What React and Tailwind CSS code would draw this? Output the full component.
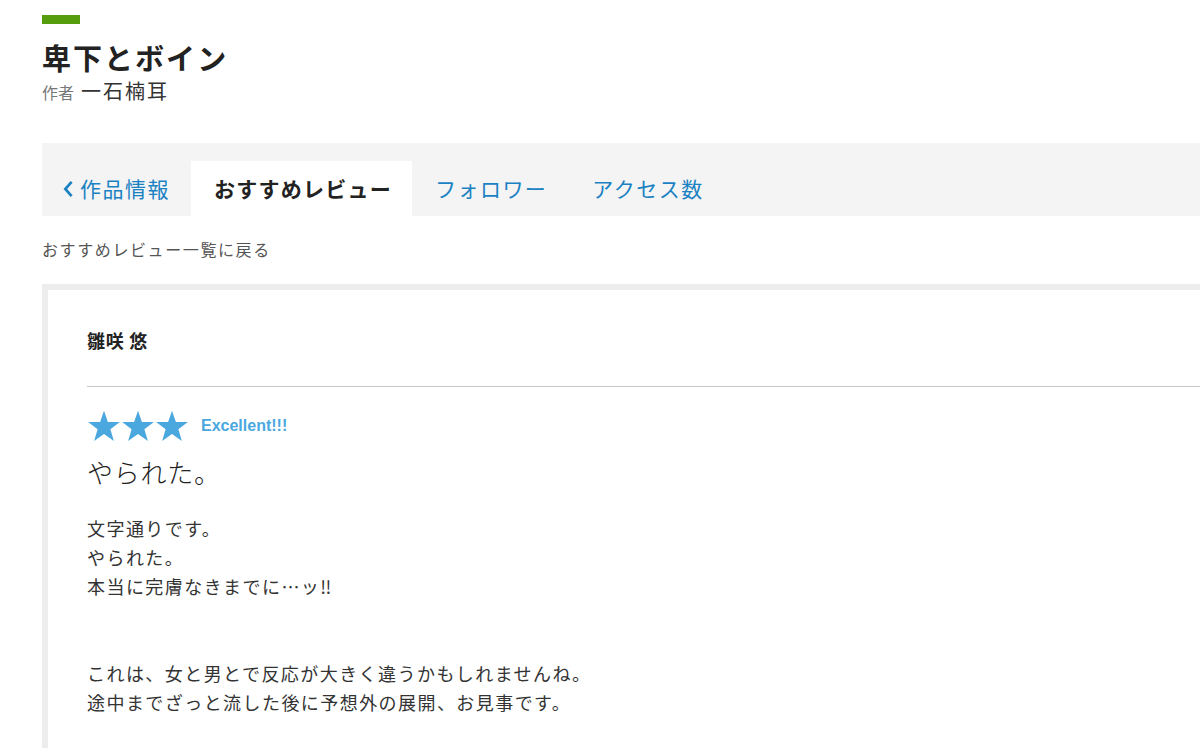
import React from 'react'

const sans = { fontFamily: '"Noto Sans CJK JP", "Liberation Sans", sans-serif' }

function Star() {
    return (
        <svg viewBox="0 0 24 23" className="w-[34px] h-[32px]" fill="#4aa8df">
            <polygon points="12,0.5 14.8,8.6 23.4,8.7 16.6,13.9 19.1,22.2 12,17.2 4.9,22.2 7.4,13.9 0.6,8.7 9.2,8.6" />
        </svg>
    )
}

function Tabs() {
    return (
        <div className="mt-[37px] h-[73px] bg-[#f4f4f4] flex items-end pl-[20px]">
            <a className="h-[55px] flex items-center pr-[21px] text-[21px] tracking-[0.07em] text-[#1a82c3]">
                <svg viewBox="0 0 12 20" className="w-[12px] h-[18px] mr-[6px]" fill="none" stroke="#1a82c3" strokeWidth="3">
                    <polyline points="10,2 3,10 10,18" />
                </svg>
                作品情報
            </a>
            <div className="h-[55px] flex items-center pl-[23px] pr-[20px] bg-white text-[21px] tracking-[0.06em] font-bold text-[#222]">
                おすすめレビュー
            </div>
            <a className="h-[55px] flex items-center px-[23px] text-[21px] tracking-[0.07em] text-[#1a82c3]">
                フォロワー
            </a>
            <a className="h-[55px] flex items-center px-[22px] text-[21px] tracking-[0.07em] text-[#1a82c3]">
                アクセス数
            </a>
        </div>
    )
}

export default function App() {
    return (
        <div className="w-full overflow-hidden bg-white" style={sans}>
            <div className="w-[1300px] pl-[42px] pt-[15px] pb-[40px]">
                {/* Header */}
                <div className="w-[38px] h-[9px] bg-[#559d0c]" />
                <h1 className="mt-[13px] text-[29px] leading-[40px] font-bold tracking-[0.07em] text-[#222]">
                    卑下とボイン
                </h1>
                <p className="leading-[28px] text-[#333]">
                    <span className="text-[16px] text-[#777]">作者</span>
                    <span className="ml-[7px] text-[20px] tracking-[0.1em]">一石楠耳</span>
                </p>

                <Tabs />

                <p className="mt-[21px] text-[16px] leading-[24px] tracking-[0.1em] text-[#555]">
                    おすすめレビュー一覧に戻る
                </p>

                {/* Review card */}
                <div className="mt-[23px] border-[6px] border-[#ededed] pl-[39px] pt-[36px] pb-[40px]">
                    <p className="text-[18px] leading-[28px] font-bold tracking-[0.04em] text-[#222]">雛咲 悠</p>
                    <div className="mt-[32px] h-px bg-[#c8c8c8]" />
                    <div className="mt-[23px] flex items-center">
                        <Star />
                        <Star />
                        <Star />
                        <span className="ml-[12px] text-[16px] font-bold text-[#4aa8df]" style={{ fontFamily: '"Liberation Sans", sans-serif' }}>
                            Excellent!!!
                        </span>
                    </div>
                    <h2 className="mt-[12px] text-[26px] leading-[36px] font-light tracking-[0.03em] text-[#222]">
                        やられた。
                    </h2>
                    <p className="mt-[24px] text-[18px] leading-[29px] tracking-[0.08em] text-[#333]">
                        文字通りです。<br />
                        やられた。<br />
                        本当に完膚なきまでに…ッ‼<br />
                        <br />
                        <br />
                        これは、女と男とで反応が大きく違うかもしれませんね。<br />
                        途中までざっと流した後に予想外の展開、お見事です。
                    </p>
                </div>
            </div>
        </div>
    )
}
